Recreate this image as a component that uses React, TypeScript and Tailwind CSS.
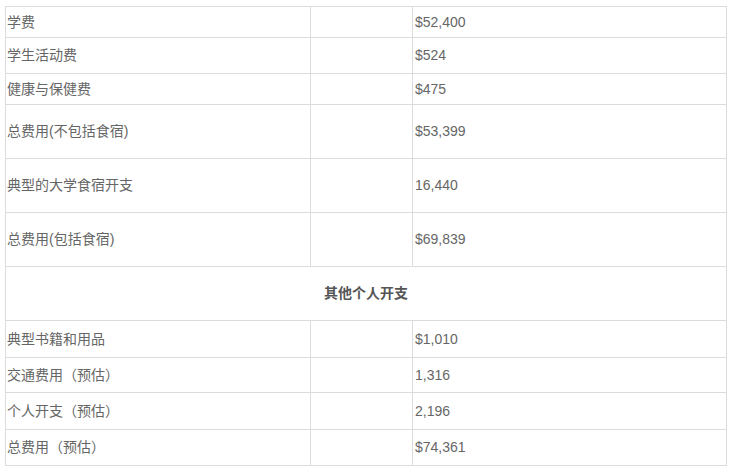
const rows: { label: string; value: string; h: string }[] = [
  { label: "学费", value: "$52,400", h: "h-[31px]" },
  { label: "学生活动费", value: "$524", h: "h-[36px]" },
  { label: "健康与保健费", value: "$475", h: "h-[31px]" },
  { label: "总费用(不包括食宿)", value: "$53,399", h: "h-[54px]" },
  { label: "典型的大学食宿开支", value: "16,440", h: "h-[54px]" },
  { label: "总费用(包括食宿)", value: "$69,839", h: "h-[54px]" },
]

const others: { label: string; value: string; h: string }[] = [
  { label: "典型书籍和用品", value: "$1,010", h: "h-[37px]" },
  { label: "交通费用（预估）", value: "1,316", h: "h-[35px]" },
  { label: "个人开支（预估）", value: "2,196", h: "h-[37px]" },
  { label: "总费用（预估）", value: "$74,361", h: "h-[36px]" },
]

function Row({ label, value, h }: { label: string; value: string; h: string }) {
  return (
    <div className={`flex ${h} border-b border-[#dcdcdc]`}>
      <div className="flex w-[305px] items-center border-r border-[#dcdcdc] pl-[1px]">{label}</div>
      <div className="w-[102px] border-r border-[#dcdcdc]" />
      <div className="flex flex-1 items-center pl-[2px]">{value}</div>
    </div>
  )
}

export default function App() {
  return (
    <div className="h-[472px] w-[732px] bg-white pl-[5px] pt-[6px] text-[14px] text-[#666] [font-family:'Liberation_Sans','Noto_Sans_CJK_SC',sans-serif]">
      <div className="w-[722px] border border-b-0 border-[#dcdcdc]">
        {rows.map((r) => (
          <Row key={r.label} {...r} />
        ))}
        <div className="flex h-[54px] items-center justify-center border-b border-[#dcdcdc] font-bold text-[#555]">
          其他个人开支
        </div>
        {others.map((r) => (
          <Row key={r.label} {...r} />
        ))}
      </div>
    </div>
  )
}
